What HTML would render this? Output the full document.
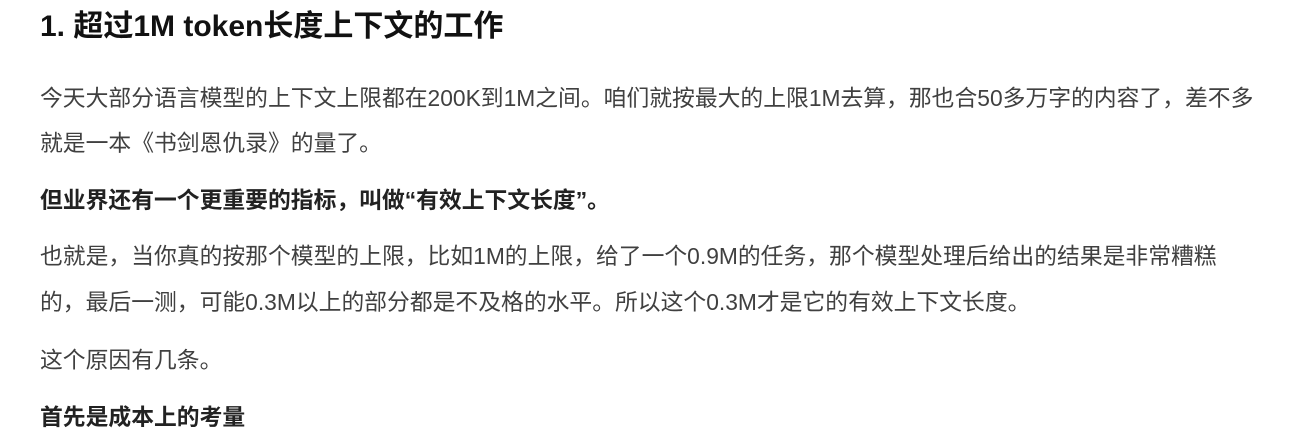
<!DOCTYPE html>
<html><head><meta charset="utf-8"><style>
html,body{margin:0;padding:0;background:#fff;width:1291px;height:409px;overflow:hidden}
.l{position:absolute;left:40px;white-space:nowrap;font-family:"Liberation Sans","Noto Sans CJK SC",sans-serif;font-size:22.8px;line-height:45px;color:#404040}
.h{font-size:30px;font-weight:bold;color:#111;line-height:45px}
.b{font-weight:bold;color:#222}
</style></head><body>
<div class="l h" style="top:4px">1. 超过1M token长度上下文的工作</div>
<div class="l" style="top:76px">今天大部分语言模型的上下文上限都在200K到1M之间。咱们就按最大的上限1M去算，那也合50多万字的内容了，差不多</div>
<div class="l" style="top:121px">就是一本《书剑恩仇录》的量了。</div>
<div class="l b" style="top:178px">但业界还有一个更重要的指标，叫做“有效上下文长度”。</div>
<div class="l" style="top:234px">也就是，当你真的按那个模型的上限，比如1M的上限，给了一个0.9M的任务，那个模型处理后给出的结果是非常糟糕</div>
<div class="l" style="top:280px">的，最后一测，可能0.3M以上的部分都是不及格的水平。所以这个0.3M才是它的有效上下文长度。</div>
<div class="l" style="top:338px">这个原因有几条。</div>
<div class="l b" style="top:395px">首先是成本上的考量</div>
</body></html>
